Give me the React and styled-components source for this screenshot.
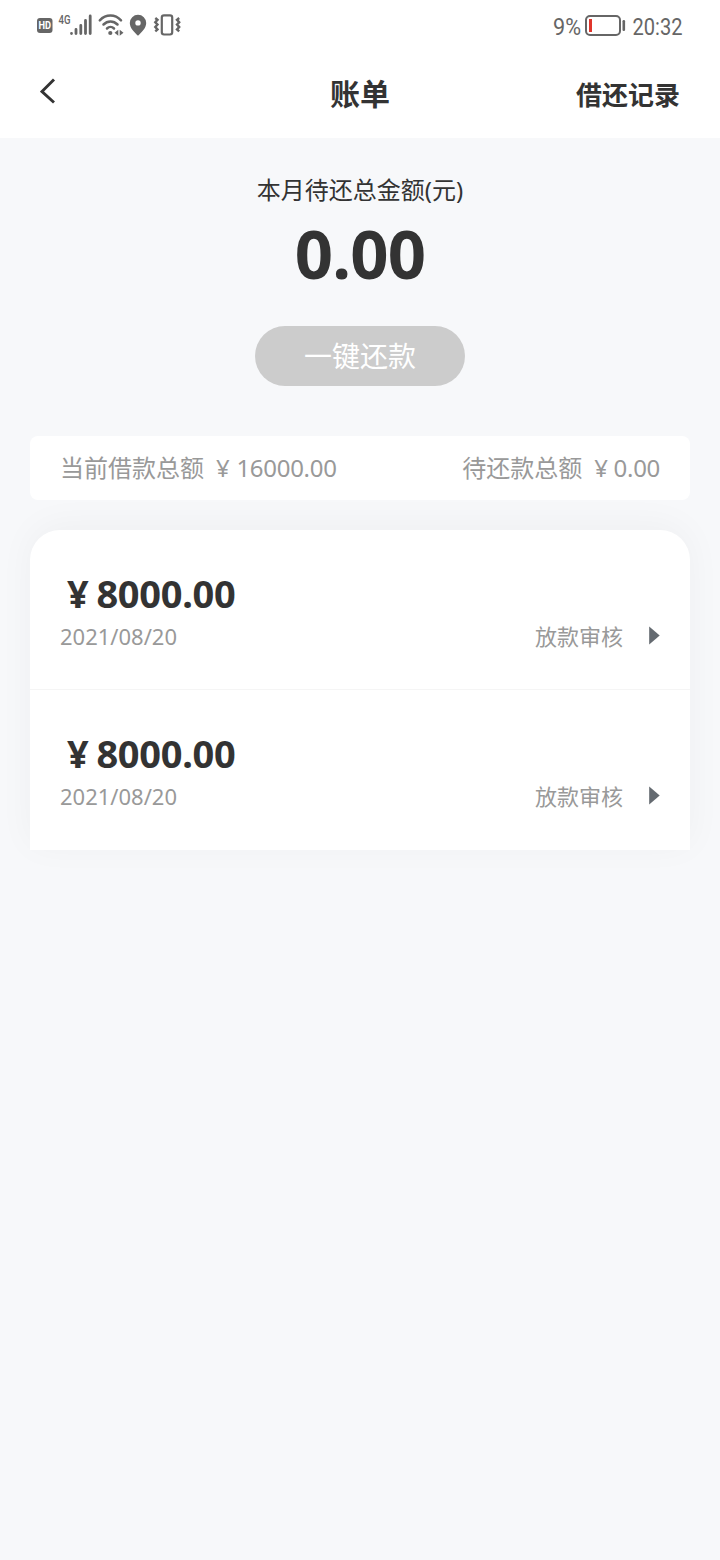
import React from "react";
import styled, { createGlobalStyle } from "styled-components";

const GlobalStyle = createGlobalStyle`
  * {
    box-sizing: border-box;
  }

  body {
    margin: 0;
    background: #f7f8fa;
    color: #333;
    font-family: "Noto Sans", "Noto Sans CJK SC", sans-serif;
  }
`;

const Page = styled.div`
  width: 720px;
  min-height: 1560px;
  background: #f7f8fa;
`;

const Header = styled.header`
  height: 138px;
  background: #fff;
`;

const StatusBar = styled.div`
  height: 50px;
  padding: 0 24px 0 36px;
  display: flex;
  justify-content: space-between;
  align-items: center;
`;

const NavBar = styled.div`
  height: 88px;
  padding: 0 40px;
  display: grid;
  grid-template-columns: 1fr auto 1fr;
  align-items: center;
`;

const BackButton = styled.button`
  display: flex;
  padding: 0 0 7px;
  border: none;
  background: none;
`;

const Title = styled.h1`
  margin: 0;
  font-size: 30px;
  line-height: 40px;
  font-weight: 700;
`;

const RecordsLink = styled.a`
  justify-self: end;
  padding-top: 1px;
  font-size: 26px;
  line-height: 40px;
  font-weight: 700;
`;

const Summary = styled.section`
  height: 298px;
  padding-top: 34px;
  display: flex;
  flex-direction: column;
  align-items: center;
`;

const SummaryLabel = styled.div`
  font-size: 24px;
  line-height: 36px;
`;

const SummaryAmount = styled.div`
  margin-top: 5px;
  height: 81px;
  font-size: 67px;
  line-height: 80px;
  font-weight: 700;
  letter-spacing: -0.8px;
`;

const RepayButton = styled.button`
  margin-top: 32px;
  width: 210px;
  height: 60px;
  padding: 0;
  border: none;
  border-radius: 30px;
  background: #ccc;
  color: #fff;
  font-family: inherit;
  font-size: 28px;
  line-height: 60px;
`;

const TotalsBar = styled.section`
  position: relative;
  z-index: 1;
  height: 64px;
  margin: 0 30px;
  padding: 0 30px;
  display: flex;
  justify-content: space-between;
  align-items: center;
  border-radius: 8px;
  background: #fff;
  color: #999;
  font-size: 24px;
  line-height: 36px;
`;

const Total = styled.div`
  display: flex;
  gap: 12px;
`;

const TotalAmount = styled.span`
  letter-spacing: -0.3px;
`;

const Currency = styled.span`
  margin-right: ${(props) => props.$gap}px;
`;

const BillCard = styled.section`
  margin: 30px 30px 0;
  border-radius: 30px 30px 0 0;
  background: #fff;
  box-shadow: 0 -5px 36px rgba(0, 0, 0, 0.04);
`;

const BillRow = styled.div`
  height: 160px;
  padding: 39px 30px 0;
  border-bottom: ${(props) => (props.$last ? "none" : "1px solid #f5f5f5")};
`;

const BillAmount = styled.div`
  padding-left: 7px;
  font-size: 38px;
  line-height: 48px;
  font-weight: 700;
  letter-spacing: -0.3px;
`;

const BillMeta = styled.div`
  margin-top: 3px;
  display: flex;
  justify-content: space-between;
  align-items: center;
  color: #999;
  font-size: 22px;
  line-height: 32px;
`;

const BillStatus = styled.div`
  display: flex;
  align-items: center;
  gap: 26px;
`;

const bills = [
  { id: 1, amount: "8000.00", date: "2021/08/20", status: "放款审核" },
  { id: 2, amount: "8000.00", date: "2021/08/20", status: "放款审核" },
];

const StatusIcons = () => (
  <svg width="146" height="30" viewBox="36 10 146 30" fill="#666">
    <rect x="37" y="18" width="15.500" height="15" rx="3" />
    <text
      x="38.500"
      y="29.300"
      fill="#fff"
      fontFamily="Roboto, sans-serif"
      fontWeight="700"
      fontSize="10"
      textLength="12.500"
      lengthAdjust="spacingAndGlyphs"
    >
      HD
    </text>
    <text
      x="58.500"
      y="24"
      fontFamily="Roboto, sans-serif"
      fontWeight="500"
      fontSize="13"
      textLength="12"
      lengthAdjust="spacingAndGlyphs"
    >
      4G
    </text>
    <g stroke="#666" strokeWidth="2.800" strokeLinecap="round">
      <path d="M71.500 33.500v0M76 29.500v4M80.800 25.500v8M85.500 20.500v13M90.200 16v17.500" />
    </g>
    <g fill="none" stroke="#666" strokeWidth="2.500" strokeLinecap="round">
      <path d="M99.800 20.300C106 14 115 14 121 20.300" />
      <path d="M103.500 24.500C107.500 20.500 113.500 20.500 117.500 24.500" />
      <path d="M107 28.500C109 26.500 112 26.500 114 28.500" />
    </g>
    <circle cx="110.300" cy="33" r="2.100" />
    <path d="M118.300 29.800v6l-3.800-3zM119.700 29.800v6l3.800-3z" />
    <path
      fillRule="evenodd"
      d="M138 14.800a8.200 8.200 0 0 0-8.200 8.200c0 5 4.700 9.500 8.200 12.800 3.500-3.300 8.200-7.800 8.200-12.800a8.200 8.200 0 0 0-8.200-8.200zm0 5.400a2.700 2.700 0 1 1 0 5.400 2.700 2.700 0 0 1 0-5.400z"
    />
    <g fill="none" stroke="#666">
      <rect x="161.800" y="15.300" width="10.400" height="19.200" rx="2.200" strokeWidth="2.200" />
      <path
        d="M155.300 18l2.200 1.800-2.200 2.400 2.200 2.400-2.200 2.400 2.200 2.400-2.200 2M179.200 18l-2.200 1.800 2.200 2.400-2.200 2.400 2.200 2.400-2.200 2.400 2.200 2"
        strokeWidth="2.400"
      />
    </g>
  </svg>
);

const BatteryAndClock = () => (
  <svg width="144" height="30" viewBox="552 10 144 30" fill="#666">
    <g fontFamily="Roboto, sans-serif" fontSize="24">
      <text x="553" y="34.500" textLength="28" lengthAdjust="spacingAndGlyphs">
        9%
      </text>
      <text x="632.500" y="34.500" textLength="50" lengthAdjust="spacingAndGlyphs">
        20:32
      </text>
    </g>
    <rect
      x="586"
      y="16"
      width="34"
      height="19"
      rx="4"
      fill="none"
      stroke="#666"
      strokeWidth="2"
    />
    <rect x="589" y="19" width="3" height="13" fill="#e0352b" />
    <rect x="622.500" y="20" width="2.600" height="11" rx="1.200" />
  </svg>
);

const BackIcon = () => (
  <svg width="16" height="26" viewBox="0 0 16 26" fill="none">
    <path d="M14 1.500L2 13.500l12 11" stroke="#333" strokeWidth="2.900" />
  </svg>
);

const ArrowIcon = () => (
  <svg width="11" height="20" viewBox="0 0 11 20">
    <path d="M0.200 0.500l10.500 9-10.500 9z" fill="#646a70" />
  </svg>
);

const App = () => {
  return (
    <Page>
      <GlobalStyle />
      <Header>
        <StatusBar>
          <StatusIcons />
          <BatteryAndClock />
        </StatusBar>
        <NavBar>
          <BackButton type="button">
            <BackIcon />
          </BackButton>
          <Title>账单</Title>
          <RecordsLink>借还记录</RecordsLink>
        </NavBar>
      </Header>

      <Summary>
        <SummaryLabel>本月待还总金额(元)</SummaryLabel>
        <SummaryAmount>0.00</SummaryAmount>
        <RepayButton type="button">一键还款</RepayButton>
      </Summary>

      <TotalsBar>
        <Total>
          <span>当前借款总额</span>
          <TotalAmount>
            <Currency $gap={7}>¥</Currency>16000.00
          </TotalAmount>
        </Total>
        <Total>
          <span>待还款总额</span>
          <TotalAmount>
            <Currency $gap={6}>¥</Currency>0.00
          </TotalAmount>
        </Total>
      </TotalsBar>

      <BillCard>
        {bills.map((bill, index) => (
          <BillRow key={bill.id} $last={index === bills.length - 1}>
            <BillAmount>
              <Currency $gap={8}>¥</Currency>
              {bill.amount}
            </BillAmount>
            <BillMeta>
              <span>{bill.date}</span>
              <BillStatus>
                <span>{bill.status}</span>
                <ArrowIcon />
              </BillStatus>
            </BillMeta>
          </BillRow>
        ))}
      </BillCard>
    </Page>
  );
};

export default App;
